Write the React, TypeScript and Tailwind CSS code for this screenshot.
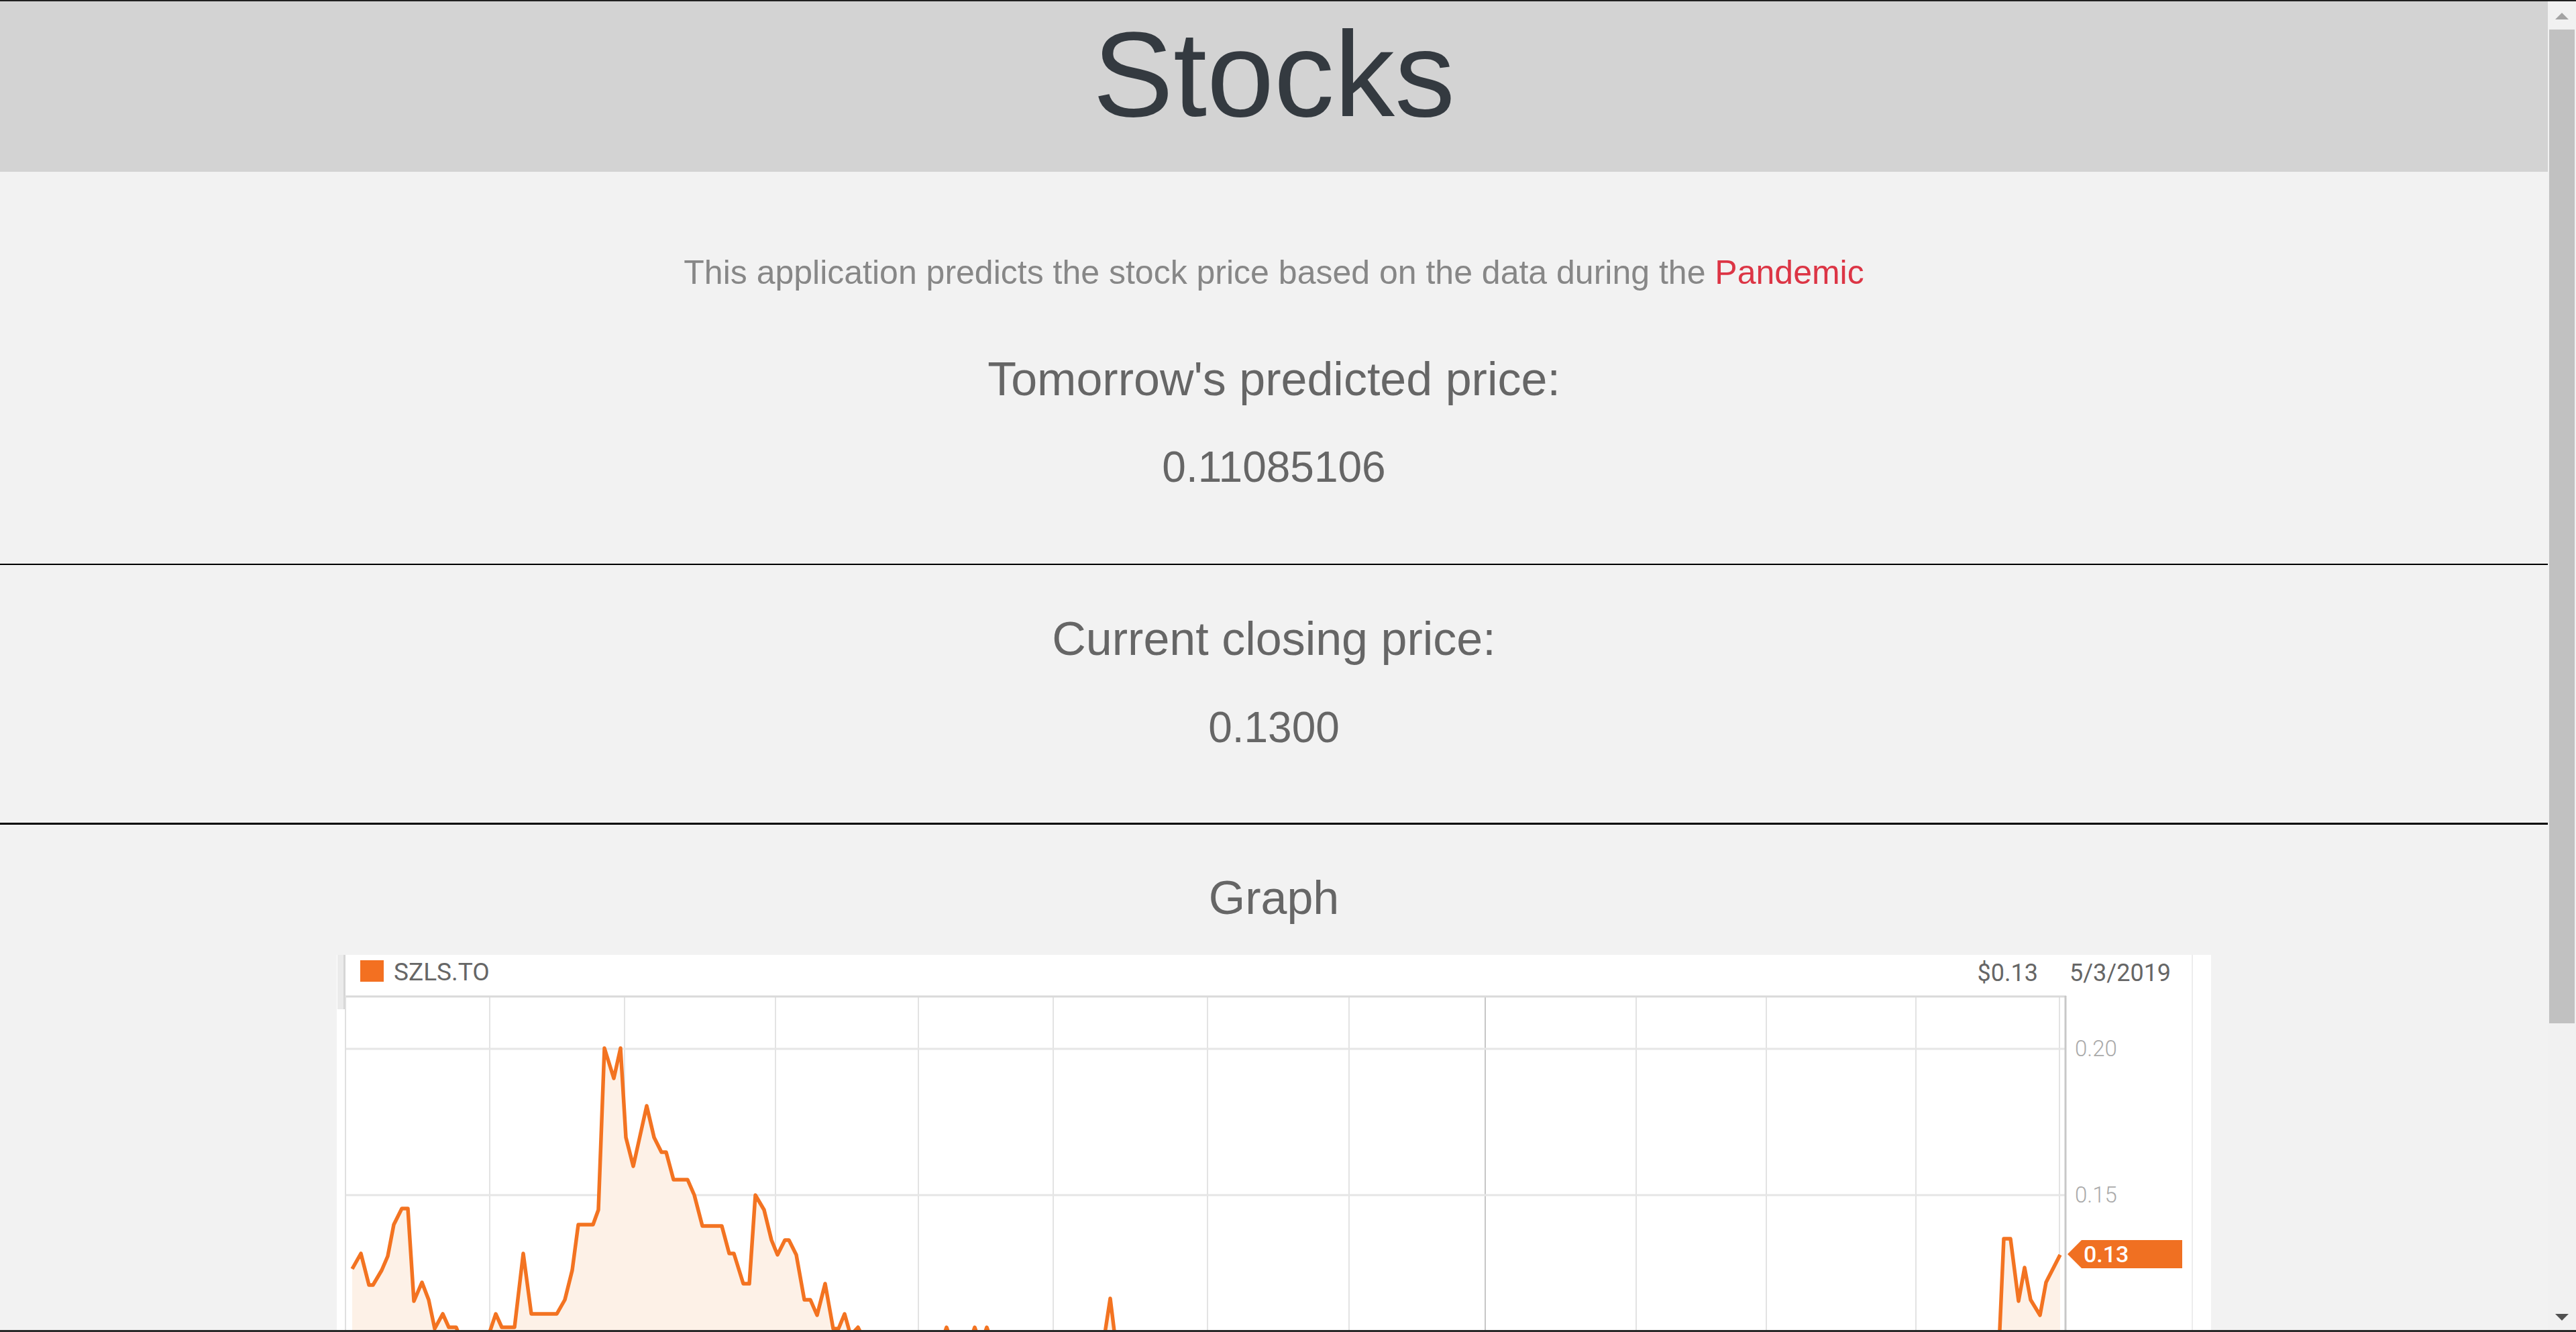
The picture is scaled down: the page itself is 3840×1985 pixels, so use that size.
import React from "react"

// price line, in chart-local pixels (x from container left, y from container top)
const line: [number, number][] = [
  [23, 468], [36, 445], [48, 492], [54, 492], [67, 470], [76, 449], [85, 402], [97, 378],
  [106, 378], [115, 516], [127, 488], [137, 514], [146, 557], [158, 535], [167, 555],
  [178, 555], [190, 585], [208, 597], [223, 577], [237, 535], [246, 555], [265, 555],
  [278, 445], [290, 535], [328, 535], [340, 514], [351, 470], [360, 402], [382, 402],
  [390, 380], [399, 139], [413, 184], [423, 139], [431, 272], [442, 315], [462, 225],
  [473, 272], [484, 294], [491, 294], [502, 335], [523, 335], [533, 358], [545, 404],
  [574, 404], [585, 445], [592, 445], [606, 490], [615, 490], [624, 358], [637, 380],
  [648, 425], [657, 447], [668, 425], [674, 425], [685, 447], [697, 514], [706, 514],
  [716, 537], [728, 490], [740, 557], [748, 557], [757, 535], [766, 567], [777, 555],
  [788, 577], [820, 600], [860, 590], [903, 572], [909, 555], [915, 572], [945, 572],
  [951, 555], [957, 572], [963, 572], [969, 555], [975, 572], [1020, 595], [1080, 585],
  [1143, 577], [1153, 512], [1161, 577], [1220, 600], [1320, 610], [1450, 598],
  [1600, 615], [1760, 605], [1900, 620], [2050, 610], [2200, 618], [2350, 600],
  [2440, 590], [2473, 577], [2479, 559], [2485, 423], [2495, 423], [2507, 516],
  [2516, 466], [2525, 514], [2539, 537], [2548, 488], [2569, 447],
]

const vGrid = [228, 429, 654, 867, 1068, 1298, 1509, 1712, 1937, 2131, 2354, 2568]
const hGrid = [140, 358, 576]

function StockChart() {
  const pts = line.map(([x, y]) => `${x},${y}`).join(" ")
  const area = `${pts} 2569,800 23,800`
  return (
    <div className="mx-auto mt-[50px] h-[800px] w-[2794px] bg-white">
      <svg width="2794" height="800" viewBox="0 0 2794 800">
        {/* iframe edge */}
        <rect x="1" y="0" width="10" height="81" fill="#ebebeb" />
        <rect x="10" y="0" width="3" height="81" fill="#d6d6d6" />
        <rect x="2765" y="0" width="2" height="800" fill="#ededed" />

        {/* legend */}
        <rect x="35" y="8" width="35" height="32" fill="#f37021" />
        <text x="85" y="38" fontSize="37" fill="#666" fontFamily="Roboto, sans-serif">
          SZLS.TO
        </text>
        <text x="2536" y="39" fontSize="36" fill="#666" textAnchor="end" fontFamily="Roboto, sans-serif">
          $0.13
        </text>
        <text x="2583" y="39" fontSize="36" fill="#666" fontFamily="Roboto, sans-serif">
          5/3/2019
        </text>

        {/* grid */}
        {vGrid.map((x) => (
          <line key={x} x1={x} y1="61" x2={x} y2="800" stroke={x === 1712 ? "#c6c6c6" : "#e3e3e3"} strokeWidth="2" />
        ))}
        {hGrid.map((y) => (
          <line key={y} x1="12" y1={y} x2="2576" y2={y} stroke="#e6e6e6" strokeWidth="3" />
        ))}
        <line x1="12" y1="62" x2="2578" y2="62" stroke="#dadada" strokeWidth="3" />
        <line x1="13" y1="61" x2="13" y2="800" stroke="#e0e0e0" strokeWidth="2" />
        <line x1="2577" y1="61" x2="2577" y2="800" stroke="#c8c8c8" strokeWidth="3" />

        {/* series */}
        <polygon points={area} fill="#fdf1e7" />
        <polyline points={pts} fill="none" stroke="#f37321" strokeWidth="5.5" strokeLinejoin="round" />

        {/* y axis */}
        <text x="2591" y="151" fontSize="33" fill="#aaa" fontWeight="300" fontFamily="Roboto, sans-serif">
          0.20
        </text>
        <text x="2591" y="369" fontSize="33" fill="#aaa" fontWeight="300" fontFamily="Roboto, sans-serif">
          0.15
        </text>

        {/* last price tag */}
        <polygon points="2580,446 2601,425 2751,425 2751,467 2601,467" fill="#f07022" />
        <text x="2604" y="458" fontSize="34" fill="#fff" fontWeight="500" fontFamily="Roboto, sans-serif">
          0.13
        </text>
      </svg>
    </div>
  )
}

function Scrollbar() {
  return (
    <div className="flex w-[42px] flex-col bg-[#f1f1f1]">
      <div className="flex h-[42px] items-start justify-center pt-[17px]">
        <svg width="20" height="10" viewBox="0 0 20 10">
          <polygon points="10,0 20,10 0,10" fill="#a3a3a3" />
        </svg>
      </div>
      <div className="mx-[2px] h-[1481px] bg-[#c1c1c1]" />
      <div className="flex-1" />
      <div className="flex h-[42px] items-start justify-center pt-[18px]">
        <svg width="20" height="10" viewBox="0 0 20 10">
          <polygon points="0,0 20,0 10,10" fill="#505050" />
        </svg>
      </div>
    </div>
  )
}

export default function App() {
  return (
    <div className="flex h-[1985px] flex-col overflow-hidden font-['Liberation_Sans',Arial,sans-serif]">
      <div className="h-[2px] bg-[#202020]" />
      <div className="flex min-h-0 flex-1">
        <main className="min-w-0 flex-1 overflow-hidden bg-[#f2f2f2] text-center">
          {/* ── Header ─────────────────────────────────────────── */}
          <header className="h-[254px] bg-[#d3d3d3] pt-[19px]">
            <h1 className="text-[180px] leading-none text-[#343a40]">Stocks</h1>
          </header>

          <p className="mt-[125px] text-[50px] leading-none text-[#878787]">
            This application predicts the stock price based on the data during the{" "}
            <span className="text-[#dc3545]">Pandemic</span>
          </p>

          <h3 className="mt-[99px] text-[70px] leading-none text-[#666]">Tomorrow's predicted price:</h3>
          <div className="mt-[64px] text-[64px] leading-none text-[#666]">0.11085106</div>

          <div className="mt-[112px] h-[2px] bg-black" />

          <h3 className="mt-[75px] text-[70px] leading-none text-[#666]">Current closing price:</h3>
          <div className="mt-[65px] text-[64px] leading-none text-[#666]">0.1300</div>

          <div className="mt-[110px] h-[3px] bg-black" />

          <h3 className="mt-[74px] text-[70px] leading-none text-[#666]">Graph</h3>
          <StockChart />
        </main>
        <Scrollbar />
      </div>
      <div className="h-[3px] bg-[#2a2a2a]" />
    </div>
  )
}
